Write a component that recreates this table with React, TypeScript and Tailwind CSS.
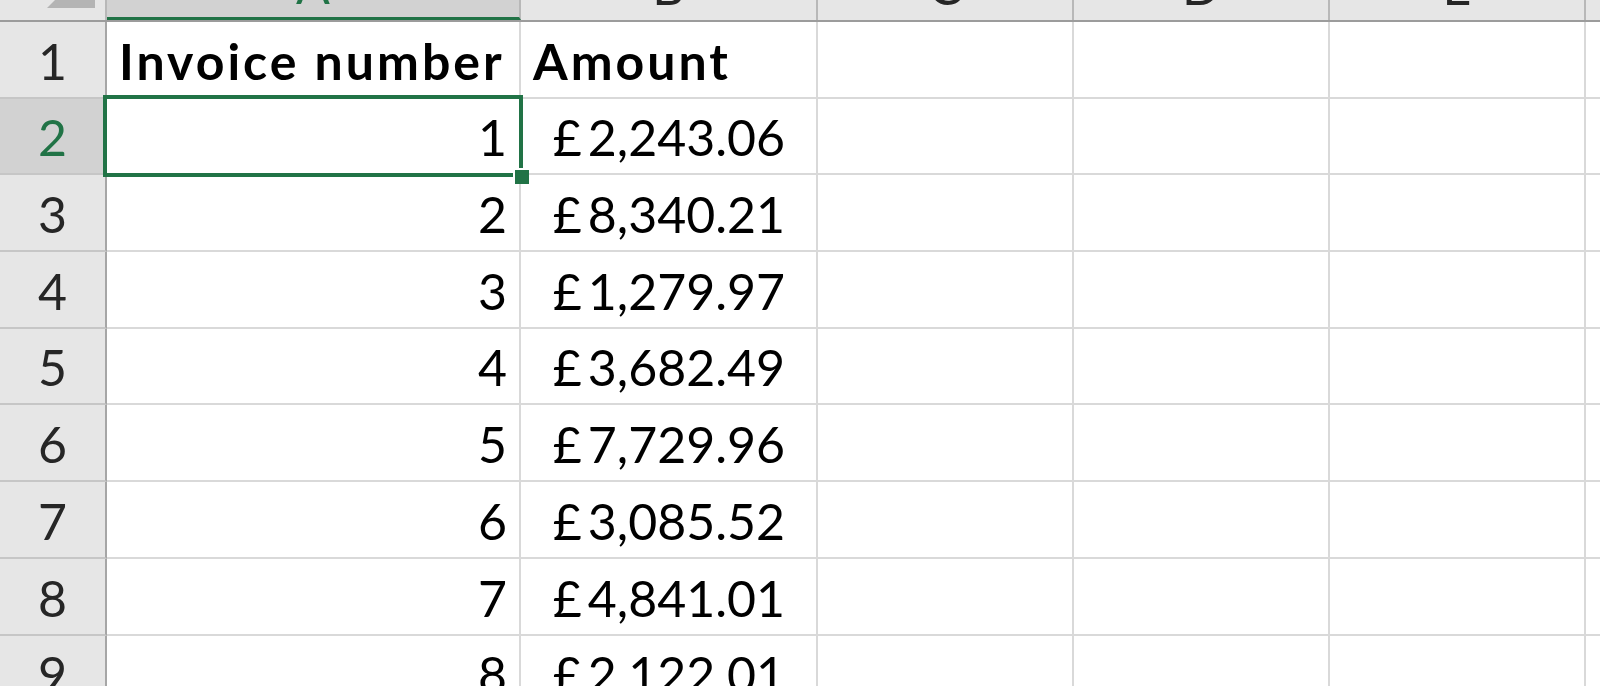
import React from "react";

const rows: [number, string][] = [
  [1, "2,243.06"],
  [2, "8,340.21"],
  [3, "1,279.97"],
  [4, "3,682.49"],
  [5, "7,729.96"],
  [6, "3,085.52"],
  [7, "4,841.01"],
  [8, "2,122.01"],
];

const cols = [
  { key: "A", w: "w-[414px]" },
  { key: "B", w: "w-[297px]" },
  { key: "C", w: "w-[256px]" },
  { key: "D", w: "w-[256px]" },
  { key: "E", w: "w-[256px]" },
];

function RowHeader({ n, active }: { n: number; active?: boolean }) {
  return (
    <div
      className={`flex w-[107px] shrink-0 items-end justify-center border-r-2 border-b-2 border-r-[#a6a6a6] border-b-[#c6c6c6] pb-[11px] ${
        active ? "bg-[#d2d2d2] text-[#217346]" : "bg-[#e6e6e6] text-[#262626]"
      }`}
    >
      {n}
    </div>
  );
}

function Cell({ w, children, right, bold, className = "" }: { w: string; children?: React.ReactNode; right?: boolean; bold?: boolean; className?: string }) {
  return (
    <div
      className={`flex ${w} shrink-0 items-end border-r-2 border-b-2 border-[#d9d9d9] pb-[11px] ${
        right ? "justify-end" : ""
      } ${bold ? "font-bold tracking-[3px]" : ""} ${className}`}
    >
      {children}
    </div>
  );
}

export default function App() {
  return (
    <div className="h-[686px] w-[1600px] overflow-hidden bg-white font-['Lato',sans-serif] text-[50px] leading-none text-black">
      {/* column headers, top part scrolled out of view */}
      <div className="-mt-[38px] flex h-[60px] border-b-2 border-[#9c9c9c] bg-[#e6e6e6] text-[#262626]">
        <div className="relative w-[107px] shrink-0 border-r-2 border-[#b8b8b8]">
          <svg className="absolute left-0 top-0" width="107" height="60" viewBox="0 0 107 60">
            <polygon points="47,46 95,46 95,-2" fill="#b4b4b4" />
          </svg>
        </div>
        {cols.map((c) => (
          <div
            key={c.key}
            className={`flex ${c.w} shrink-0 items-center justify-center border-r-2 border-[#b8b8b8] pb-[10px] ${
              c.key === "A" ? "border-b-[3px] border-b-[#217346] bg-[#d2d2d2] text-[#217346]" : ""
            }`}
          >
            {c.key}
          </div>
        ))}
        <div className="flex-1" />
      </div>

      {/* row 1: headings */}
      <div className="flex h-[76.7px]">
        <RowHeader n={1} />
        <Cell w="w-[414px]" bold className="pl-[12px]">Invoice number</Cell>
        <Cell w="w-[297px]" bold className="pl-[12px]">Amount</Cell>
        <Cell w="w-[256px]" />
        <Cell w="w-[256px]" />
        <Cell w="w-[256px]" />
        <div className="flex-1 border-b-2 border-[#d9d9d9]" />
      </div>

      {rows.map(([n, amt], i) => (
        <div key={n} className="flex h-[76.7px]">
          <RowHeader n={i + 2} active={i === 0} />
          <div className="relative flex w-[414px] shrink-0">
            <Cell w="w-full" right className="pr-[12px]">{n}</Cell>
            {i === 0 && (
              <>
                <div className="absolute -left-[4px] -top-[4px] -right-[2px] -bottom-[2px] z-10 border-[4px] border-[#217346]" />
                <div className="absolute -right-[8px] -bottom-[9px] z-20 h-[16px] w-[16px] border-t-2 border-l-2 border-white bg-[#217346]" />
              </>
            )}
          </div>
          <Cell w="w-[297px]" right className="pr-[31px]">
            <span className="mr-[6px]">£</span>
            {amt}
          </Cell>
          <Cell w="w-[256px]" />
          <Cell w="w-[256px]" />
          <Cell w="w-[256px]" />
          <div className="flex-1 border-b-2 border-[#d9d9d9]" />
        </div>
      ))}
    </div>
  );
}
